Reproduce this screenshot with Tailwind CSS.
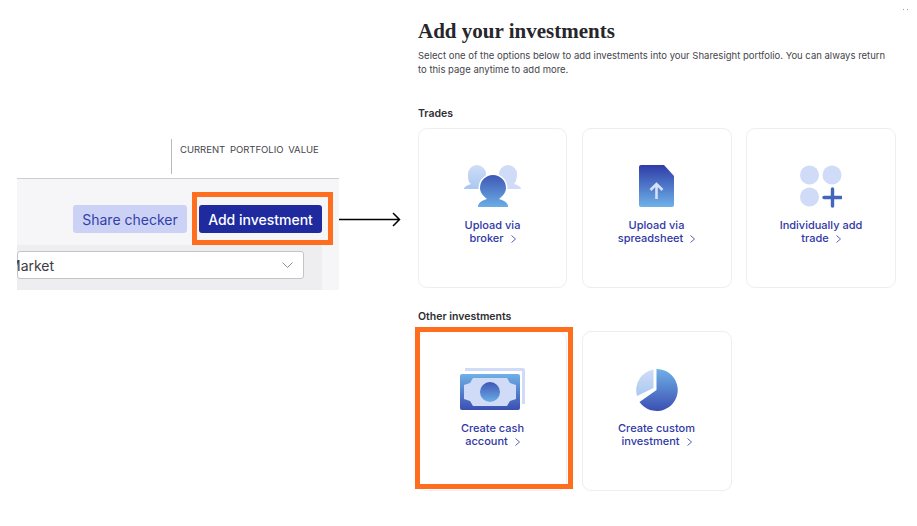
<!DOCTYPE html>
<html lang="en">
<head>
    <meta charset="UTF-8">
    <meta name="viewport" content="width=device-width, initial-scale=1.0">
    <title>Add your investments</title>
    <script src="https://cdn.jsdelivr.net/npm/@tailwindcss/browser@4"></script>
</head>
<body class="relative w-[917px] h-[526px] overflow-hidden bg-white font-['Inter',sans-serif]">
    <!-- gradients shared by the card icons -->
    <svg class="absolute w-0 h-0">
        <defs>
            <linearGradient id="darkDown" x1="0" y1="0" x2="0" y2="1"><stop offset="0" stop-color="#2f3ca8"/><stop offset="1" stop-color="#6fb2e8"/></linearGradient>
            <linearGradient id="midDown" x1="0" y1="0" x2="0" y2="1"><stop offset="0" stop-color="#3f57b5"/><stop offset="1" stop-color="#6badE6"/></linearGradient>
            <linearGradient id="lightUp" x1="0" y1="0" x2="0" y2="1"><stop offset="0" stop-color="#6fb0e6"/><stop offset="1" stop-color="#3b4fb2"/></linearGradient>
            <linearGradient id="paleDown" x1="0" y1="0" x2="0" y2="1"><stop offset="0" stop-color="#d0dcf7"/><stop offset="1" stop-color="#a9c9ef"/></linearGradient>
        </defs>
    </svg>

    <div class="flex">
        <!-- left crop of the dashboard -->
        <div class="w-[418px] shrink-0 pl-[17px] pt-[139px] relative">
            <div class="flex h-[35px] pl-[154px]">
                <div class="w-px bg-[#b9b9bd]"></div>
                <p class="ml-2 mt-[5px] text-[9.5px] leading-[12px] text-[#45454c] [word-spacing:2px]">CURRENT PORTFOLIO VALUE</p>
            </div>
            <div class="mt-[4px] w-[322px] h-[112px] bg-[#f6f6f9] border-t border-[#cdcdd6] overflow-hidden">
                <div class="flex justify-end gap-3 pt-[26px] pr-[17px] h-[66px]">
                    <button class="w-[114px] h-[28px] rounded-[3px] bg-[#ccd2f5] text-[14px] text-[#343fa9]">Share checker</button>
                    <button class="w-[123px] h-[28px] rounded-[3px] bg-[#1f2a9f] text-[14px] font-medium text-white">Add investment</button>
                </div>
                <div class="w-[305px] h-[46px] bg-[#eeeef1] pt-[6px]">
                    <div class="flex items-center justify-between w-[287px] h-[28px] bg-white border border-[#c4c4c8] rounded-[3px] pr-[10px]">
                        <span class="-ml-[10px] text-[14px] text-[#3c3c42]">Market</span>
                        <svg class="w-[11px] h-[6px]" viewBox="0 0 11 6" fill="none" stroke="#8b8b91"><path d="M.5.5l5 5 5-5"/></svg>
                    </div>
                </div>
            </div>
            <div class="absolute left-[192px] top-[192px] w-[141px] h-[53px] border-[5px] border-[#ff6d1f]"></div>
            <svg class="absolute left-[339px] top-[212px] w-[62px] h-[15px]" viewBox="0 0 62 15" fill="none" stroke="#000" stroke-width="1.5"><path d="M0 7.5h60M54 1l6.500 6.500L54 14"/></svg>
        </div>

        <!-- right side: picker page -->
        <div class="w-[477px] relative">
            <h1 class="mt-[18px] text-[21px] leading-[26px] font-bold text-[#26262b] font-['Liberation_Serif',serif]">Add your investments</h1>
            <p class="mt-[5px] text-[9.5px] leading-[14px] text-[#45454c]">Select one of the options below to add investments into your Sharesight portfolio. You can always return to this page anytime to add more.</p>

            <h2 class="mt-[30px] text-[10.5px] leading-[14px] font-semibold text-[#2e2e33]">Trades</h2>
            <div class="mt-[7px] grid grid-cols-[149px_150px_150px] gap-x-[14.500px]">
                <div class="h-[160px] rounded-[9px] border border-[#eeeef1] flex flex-col items-center pt-[36px]">
                    <svg class="w-[58px] h-[43px]" viewBox="0 0 58 43">
                        <path fill="url(#paleDown)" d="M0 24c0-2 3-4 7-5-3-2-3-6-3-10a9 9 0 0 1 18 0c0 4-1 8-3 10 4 1 7 3 7 5z"/>
                        <path fill="#cfdbf7" d="M31 24c0-2 3-4 7-5-3-2-3-6-3-10a9 9 0 0 1 18 0c0 4-1 8-3 10 4 1 7 3 7 5z"/>
                        <path fill="url(#midDown)" stroke="#fff" stroke-width="3" paint-order="stroke" d="M14 42c0-4 3-6 9-8-4-3-7-7-7-11a13 13 0 0 1 26 0c0 4-3 8-7 11 6 2 9 4 9 8z"/>
                    </svg>
                    <p class="mt-[11px] text-[11px] leading-[12.500px] font-medium text-[#2f38a6] text-center">Upload via<br>broker<svg class="inline-block ml-[7px] w-[5px] h-[8px]" viewBox="0 0 5 8" fill="none" stroke="#2f38a6" stroke-width=".8"><path d="M.5.5 4.500 4 .5 7.500"/></svg></p>
                </div>
                <div class="h-[160px] rounded-[9px] border border-[#eeeef1] flex flex-col items-center pt-[36px]">
                    <svg class="w-[35px] h-[43px]" viewBox="0 0 35 43">
                        <path fill="url(#darkDown)" d="M2 0H25L35 11V40a2 2 0 0 1-2 2H2a2 2 0 0 1-2-2V2a2 2 0 0 1 2-2z"/>
                        <path fill="none" stroke="#d6e0f8" stroke-width="2.600" d="M17.500 34V20M11.500 25l6-6 6 6"/>
                    </svg>
                    <p class="mt-[11px] text-[11px] leading-[12.500px] font-medium text-[#2f38a6] text-center">Upload via<br>spreadsheet<svg class="inline-block ml-[7px] w-[5px] h-[8px]" viewBox="0 0 5 8" fill="none" stroke="#2f38a6" stroke-width=".8"><path d="M.5.5 4.500 4 .5 7.500"/></svg></p>
                </div>
                <div class="h-[160px] rounded-[9px] border border-[#eeeef1] flex flex-col items-center pt-[36px]">
                    <svg class="w-[42px] h-[43px]" viewBox="0 0 42 43">
                        <circle cx="9.500" cy="10" r="9.500" fill="#cfdbf7"/><circle cx="32" cy="10" r="9.500" fill="#cfdbf7"/><circle cx="9.500" cy="32" r="9.500" fill="#cfdbf7"/>
                        <path fill="none" stroke="#4265c0" stroke-width="3.400" stroke-linecap="round" d="M24 32.500h17M32.500 24v17"/>
                    </svg>
                    <p class="mt-[11px] text-[11px] leading-[12.500px] font-medium text-[#2f38a6] text-center">Individually add<br>trade<svg class="inline-block ml-[7px] w-[5px] h-[8px]" viewBox="0 0 5 8" fill="none" stroke="#2f38a6" stroke-width=".8"><path d="M.5.5 4.500 4 .5 7.500"/></svg></p>
                </div>
            </div>

            <h2 class="mt-[22px] text-[10.5px] leading-[14px] font-semibold text-[#2e2e33]">Other investments</h2>
            <div class="mt-[7px] grid grid-cols-[149px_150px_150px] gap-x-[14.500px]">
                <div class="h-[160px] rounded-[9px] border border-[#eeeef1] flex flex-col items-center pt-[36px]">
                    <svg class="w-[66px] h-[43px]" viewBox="0 0 66 43">
                        <path fill="#cfdbf7" d="M5 0H63a2 2 0 0 1 2 2V36H62V3H5z"/>
                        <rect y="6" width="60" height="36" rx="2" fill="url(#lightUp)"/>
                        <path fill="#cfdbf7" d="M13 10H47L50 15 56 17V31L50 33 47 38H13L10 33 4 31V17L10 15z"/>
                        <circle cx="30" cy="24" r="10" fill="url(#midDown)"/>
                    </svg>
                    <p class="mt-[11px] text-[11px] leading-[12.500px] font-medium text-[#2f38a6] text-center">Create cash<br>account<svg class="inline-block ml-[7px] w-[5px] h-[8px]" viewBox="0 0 5 8" fill="none" stroke="#2f38a6" stroke-width=".8"><path d="M.5.5 4.500 4 .5 7.500"/></svg></p>
                </div>
                <div class="h-[160px] rounded-[9px] border border-[#eeeef1] flex flex-col items-center pt-[36px]">
                    <svg class="w-[44px] h-[43px]" viewBox="0 0 44 43">
                        <path fill="url(#lightUp)" d="M21.500 1A21 21 0 1 1 4.500 34L21.500 22z"/>
                        <path fill="url(#paleDown)" d="M18.500 1.500A21 21 0 0 0 2 28L18.500 20z"/>
                    </svg>
                    <p class="mt-[11px] text-[11px] leading-[12.500px] font-medium text-[#2f38a6] text-center">Create custom<br>investment<svg class="inline-block ml-[7px] w-[5px] h-[8px]" viewBox="0 0 5 8" fill="none" stroke="#2f38a6" stroke-width=".8"><path d="M.5.5 4.500 4 .5 7.500"/></svg></p>
                </div>
            </div>
            <div class="absolute left-[-3px] top-[327px] w-[158px] h-[162px] border-[5px] border-[#ff6d1f]"></div>
        </div>
    </div>
    <div class="absolute left-[903px] top-[9px] flex gap-[3px]">
        <span class="w-px h-px bg-[#9a9aa0]"></span><span class="w-px h-px bg-[#9a9aa0]"></span>
    </div>
</body>
</html>
